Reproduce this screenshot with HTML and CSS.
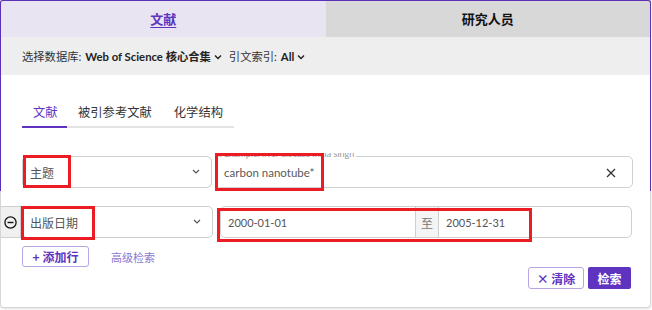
FILE: index.html
```html
<!DOCTYPE html>
<html lang="zh">
<head>
<meta charset="utf-8">
<link rel="stylesheet" href="styles.css">
</head>
<body>
<div class="card">
  <div class="tabs">
    <div class="tab tab-active"><span>文献</span></div>
    <div class="tab tab-other"><span>研究人员</span></div>
  </div>
  <div class="dbbar">
    <span class="db-label">选择数据库:</span>
    <span class="db-value">Web of Science 核心合集</span>
    <svg class="chev" width="8" height="6" viewBox="0 0 8 6"><path d="M1 1.5 L4 4.5 L7 1.5" fill="none" stroke="#222" stroke-width="1.4"/></svg>
    <span class="db-label db-gap">引文索引:</span>
    <span class="db-value">All</span>
    <svg class="chev" width="8" height="6" viewBox="0 0 8 6"><path d="M1 1.5 L4 4.5 L7 1.5" fill="none" stroke="#222" stroke-width="1.4"/></svg>
  </div>
  <div class="body">
    <div class="subtabs">
      <div class="subtab subtab-active">文献</div>
      <div class="subtab">被引参考文献</div>
      <div class="subtab">化学结构</div>
    </div>

    <div class="row row1">
      <div class="select">
        <span>主题</span>
        <svg width="10" height="6" viewBox="0 0 10 6"><path d="M2 1 L5 4 L8 1" fill="none" stroke="#555" stroke-width="1.2"/></svg>
      </div>
      <div class="input input-wide">
        <span class="hint">Example: liver disease india singh</span>
        <span class="val">carbon nanotube*</span>
        <svg class="clear" width="10" height="10" viewBox="0 0 10 10"><path d="M1 1 L9 9 M9 1 L1 9" stroke="#333" stroke-width="1.3"/></svg>
      </div>
    </div>

    <div class="row row2">
      <div class="minus">
        <svg width="13" height="13" viewBox="0 0 13 13"><circle cx="6.5" cy="6.5" r="5.6" fill="none" stroke="#111" stroke-width="1.3"/><path d="M3.5 6.5 H9.5" stroke="#111" stroke-width="1.4"/></svg>
      </div>
      <div class="select">
        <span>出版日期</span>
        <svg width="10" height="6" viewBox="0 0 10 6"><path d="M2 1 L5 4 L8 1" fill="none" stroke="#555" stroke-width="1.2"/></svg>
      </div>
      <div class="dates">
        <div class="date">2000-01-01</div>
        <div class="to">至</div>
        <div class="date date2">2005-12-31</div>
      </div>
    </div>

    <div class="actions">
      <button class="btn-outline add">+ 添加行</button>
      <span class="adv">高级检索</span>
    </div>

    <div class="submit">
      <button class="btn-outline clear-btn">× 清除</button>
      <button class="btn-fill">检索</button>
    </div>
  </div>

  <div class="mark m1"></div>
  <div class="mark m2"></div>
  <div class="mark m3"></div>
  <div class="mark m4"></div>
</div>
</body>
</html>
```
FILE: styles.css
```css
* { box-sizing: border-box; }
html, body { margin: 0; padding: 0; background: #fff; }
body {
  width: 652px; height: 310px; overflow: hidden;
  font-family: Lato, "Noto Sans CJK SC", sans-serif;
  color: #333;
}
.card {
  position: relative;
  width: 651px;
  height: 308px;
  border: 1px solid #d6d6d6;
  border-top: none;
  border-radius: 0 0 4px 4px;
  box-shadow: 0 1px 2px rgba(0,0,0,0.12);
}
.card::before {
  content: "";
  position: absolute;
  left: -1px; right: -1px; top: 0; height: 190px;
  border: 1.5px solid #5b30b8;
  border-bottom: none;
  border-radius: 3px 3px 0 0;
  pointer-events: none;
}
.tabs { display: flex; height: 37px; }
.tab {
  flex: 1;
  display: flex; align-items: center; justify-content: center;
  font-size: 13px; font-weight: 700;
  font-family: "Noto Sans CJK SC", sans-serif;
}
.tab-active { background: #e8e4f1; color: #5e33bf; }
.tab-active span { text-decoration: underline; text-underline-offset: 3px; }
.tab-other { background: #d8d8d8; color: #111; }
.dbbar {
  height: 38px;
  background: #eeeeee;
  display: flex; align-items: center;
  padding-left: 21px;
  font-size: 11.3px;
  font-family: Lato, "Noto Sans CJK SC", sans-serif;
}
.db-label { color: #333; margin-right: 4px; }
.db-value { font-weight: 700; color: #222; }
.chev { margin-left: 3px; margin-top: 1px; }
.db-gap { margin-left: 7px; }
.body { position: relative; padding: 0 17px 0 21px; }
.subtabs {
  display: flex;
  width: 212px;
  margin-top: 21px;
  border-bottom: 2px solid #e4e4e4;
  height: 32px;
}
.subtab {
  font-size: 12.3px;
  font-family: "Noto Sans CJK SC", sans-serif;
  color: #333;
  padding: 7px 11px 0 11px;
  margin-bottom: -2px;
  white-space: nowrap;
}
.subtab-active {
  color: #5e33bf;
  border-bottom: 2px solid #5e33bf;
  width: 46px;
  padding-left: 11px;
  padding-right: 0;
}
.row { display: flex; align-items: stretch; height: 32px; }
.row1 { margin-top: 28px; gap: 3px; }
.row2 { margin-top: 18px; position: relative; gap: 7px; }
.select {
  width: 191px;
  border: 1px solid #cfcfcf;
  border-radius: 5px;
  display: flex; align-items: center; justify-content: space-between;
  padding: 0 10px 0 7px;
  font-size: 12px;
  font-family: "Noto Sans CJK SC", sans-serif;
  color: #555;
}
.input {
  position: relative;
  border: 1px solid #cfcfcf;
  border-radius: 5px;
  display: flex; align-items: center;
  padding: 0 8px;
  font-size: 11.5px;
  color: #5a5a5a;
}
.input-wide { width: 420px; }
.hint {
  position: absolute; left: 6px; top: -9px;
  font-size: 9px; color: #999; background: #fff; padding: 0 2px;
  line-height: 11px;
  clip-path: inset(45% 0 0 0);
}
.val { margin-top: 1px; }
.clear { position: absolute; right: 16px; top: 11px; }
.minus {
  position: absolute; left: -21px; top: 0;
  width: 20px; height: 32px;
  background: #f0f0f0;
  border: 1px solid #cfcfcf;
  border-left: none;
  display: flex; align-items: center; justify-content: center;
}
.dates {
  display: flex;
  width: 412px;
  border: 1px solid #cfcfcf;
  border-radius: 5px;
  overflow: hidden;
  font-size: 11px;
  color: #555;
}
.date {
  width: 194px;
  display: flex; align-items: center;
  padding-left: 7px;
}
.date2 { flex: 1; border-left: 1px solid #cfcfcf; }
.to {
  width: 23px;
  background: #f4f4f4;
  border-left: 1px solid #cfcfcf;
  display: flex; align-items: center; justify-content: center;
  font-family: "Noto Sans CJK SC", sans-serif;
  color: #777; font-size: 12px;
}
.actions {
  display: flex; align-items: center;
  margin-top: 8px;
  gap: 22px;
}
button {
  font-family: "Noto Sans CJK SC", sans-serif;
  font-size: 12px;
  cursor: pointer;
}
.btn-outline {
  height: 21px;
  background: #fff;
  border: 1px solid #b7a5e4;
  border-radius: 3px;
  color: #5e33bf;
  font-weight: 700;
  padding: 0 11px;
  line-height: 19px;
}
.add { width: 67px; padding: 0; }
.adv {
  font-size: 11px; color: #8a76cf;
  font-family: "Noto Sans CJK SC", sans-serif;
}
.submit {
  display: flex; justify-content: flex-end; gap: 4px;
  margin-top: 0px;
  padding-right: 2px;
}
.clear-btn { height: 22px; width: 56px; padding: 0; font-weight: 700; }
.btn-fill {
  height: 22px; width: 43px;
  background: #5e33bf; color: #fff; font-weight: 700;
  border: none; border-radius: 2px;
}
.mark {
  position: absolute;
  border: 3.5px solid #ec1c24;
  pointer-events: none;
}
.m1 { left: 22px; top: 155px; width: 48px; height: 33px; }
.m2 { left: 214px; top: 153px; width: 109px; height: 38px; }
.m3 { left: 20px; top: 206px; width: 74px; height: 34px; }
.m4 { left: 216px; top: 208px; width: 315px; height: 34px; }
```
